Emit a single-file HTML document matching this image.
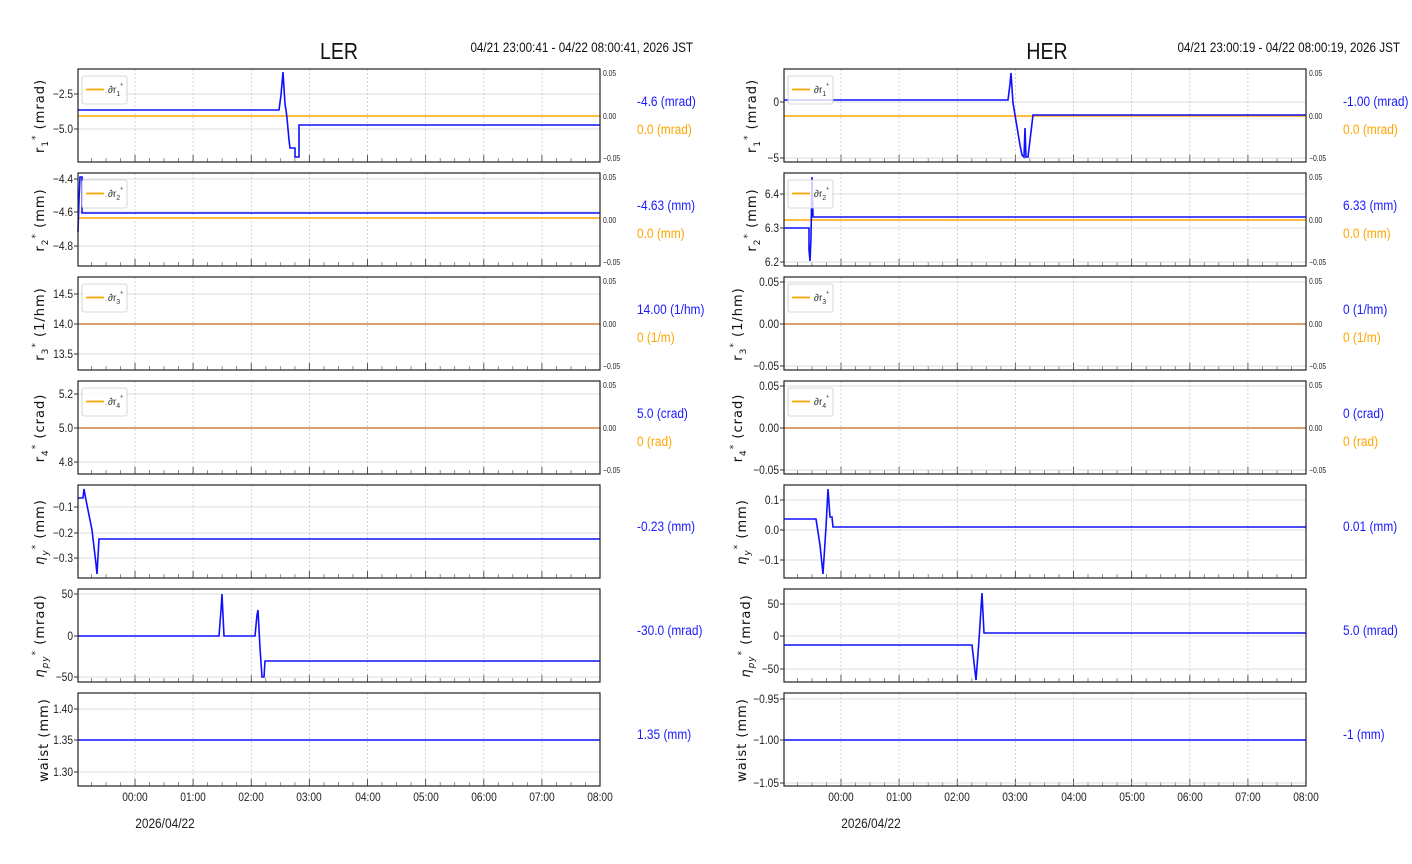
<!DOCTYPE html>
<html><head><meta charset="utf-8">
<style>
html,body{margin:0;padding:0;background:#fff;}
svg{display:block;}
.t{font-family:"Liberation Sans",sans-serif;font-size:12px;fill:#222;}
.s{font-family:"Liberation Sans",sans-serif;font-size:8px;fill:#222;}
.v{font-family:"Liberation Sans",sans-serif;font-size:14px;}
.yl{font-family:"DejaVu Sans",sans-serif;font-size:13px;fill:#111;letter-spacing:1px;}
.lg{font-family:"Liberation Sans",sans-serif;font-size:10px;fill:#333;}
.b{fill:none;stroke:#1010ff;stroke-width:1.6;}
.o{fill:none;stroke:#ffa500;stroke-width:1.6;}
.hg{stroke:#d0d0d0;stroke-width:0.8;}
</style></head><body>
<svg width="1412" height="864" viewBox="0 0 1412 864" xmlns="http://www.w3.org/2000/svg">
<defs>
<g id="fr">
  <g stroke="#c8c8c8" stroke-width="0.8" stroke-dasharray="2,2">
    <line x1="57" y1="0" x2="57" y2="93"/><line x1="115.1" y1="0" x2="115.1" y2="93"/>
    <line x1="173.3" y1="0" x2="173.3" y2="93"/><line x1="231.4" y1="0" x2="231.4" y2="93"/>
    <line x1="289.5" y1="0" x2="289.5" y2="93"/><line x1="347.6" y1="0" x2="347.6" y2="93"/>
    <line x1="405.8" y1="0" x2="405.8" y2="93"/><line x1="463.9" y1="0" x2="463.9" y2="93"/>
  </g>
  <g stroke="#555" stroke-width="1">
    <line x1="57" y1="93" x2="57" y2="86"/><line x1="115.1" y1="93" x2="115.1" y2="86"/>
    <line x1="173.3" y1="93" x2="173.3" y2="86"/><line x1="231.4" y1="93" x2="231.4" y2="86"/>
    <line x1="289.5" y1="93" x2="289.5" y2="86"/><line x1="347.6" y1="93" x2="347.6" y2="86"/>
    <line x1="405.8" y1="93" x2="405.8" y2="86"/><line x1="463.9" y1="93" x2="463.9" y2="86"/>
  </g>
  <g stroke="#777" stroke-width="0.8">
    <line x1="13.4" y1="93" x2="13.4" y2="89"/><line x1="28" y1="93" x2="28" y2="89"/><line x1="42.5" y1="93" x2="42.5" y2="89"/>
    <line x1="71.5" y1="93" x2="71.5" y2="89"/><line x1="86" y1="93" x2="86" y2="89"/><line x1="100.6" y1="93" x2="100.6" y2="89"/>
    <line x1="129.6" y1="93" x2="129.6" y2="89"/><line x1="144.2" y1="93" x2="144.2" y2="89"/><line x1="158.7" y1="93" x2="158.7" y2="89"/>
    <line x1="187.8" y1="93" x2="187.8" y2="89"/><line x1="202.3" y1="93" x2="202.3" y2="89"/><line x1="216.9" y1="93" x2="216.9" y2="89"/>
    <line x1="245.9" y1="93" x2="245.9" y2="89"/><line x1="260.5" y1="93" x2="260.5" y2="89"/><line x1="275" y1="93" x2="275" y2="89"/>
    <line x1="304" y1="93" x2="304" y2="89"/><line x1="318.6" y1="93" x2="318.6" y2="89"/><line x1="333.1" y1="93" x2="333.1" y2="89"/>
    <line x1="362.2" y1="93" x2="362.2" y2="89"/><line x1="376.7" y1="93" x2="376.7" y2="89"/><line x1="391.3" y1="93" x2="391.3" y2="89"/>
    <line x1="420.3" y1="93" x2="420.3" y2="89"/><line x1="434.8" y1="93" x2="434.8" y2="89"/><line x1="449.4" y1="93" x2="449.4" y2="89"/>
    <line x1="478.4" y1="93" x2="478.4" y2="89"/><line x1="493" y1="93" x2="493" y2="89"/><line x1="507.5" y1="93" x2="507.5" y2="89"/>
  </g>
</g>
<g id="bd"><rect x="0" y="0" width="522" height="93" fill="none" stroke="#222" stroke-width="1.2"/></g>
<g id="lgb"><rect x="0" y="0" width="45" height="28" rx="2" fill="#fff" fill-opacity="0.8" stroke="#ccc" stroke-width="0.8"/><line x1="4" y1="13.5" x2="22" y2="13.5" stroke="#ffa500" stroke-width="1.8"/></g>
</defs>

<!-- titles -->
<g transform="translate(339,0) scale(0.85,1)"><text x="0" y="59" text-anchor="middle" style="font-family:'Liberation Sans',sans-serif;font-size:23px;fill:#111">LER</text></g>
<g transform="translate(693,0) scale(0.835,1)"><text x="0" y="52" text-anchor="end" class="v" style="fill:#111">04/21 23:00:41 - 04/22 08:00:41, 2026 JST</text></g>
<g transform="translate(1047,0) scale(0.85,1)"><text x="0" y="59" text-anchor="middle" style="font-family:'Liberation Sans',sans-serif;font-size:23px;fill:#111">HER</text></g>
<g transform="translate(1400,0) scale(0.835,1)"><text x="0" y="52" text-anchor="end" class="v" style="fill:#111">04/21 23:00:19 - 04/22 08:00:19, 2026 JST</text></g>

<!-- frames -->
<g transform="translate(78,69)"><use href="#fr"/></g>
<g transform="translate(78,173)"><use href="#fr"/></g>
<g transform="translate(78,277)"><use href="#fr"/></g>
<g transform="translate(78,381)"><use href="#fr"/></g>
<g transform="translate(78,485)"><use href="#fr"/></g>
<g transform="translate(78,589)"><use href="#fr"/></g>
<g transform="translate(78,693)"><use href="#fr"/></g>
<g transform="translate(784,69)"><use href="#fr"/></g>
<g transform="translate(784,173)"><use href="#fr"/></g>
<g transform="translate(784,277)"><use href="#fr"/></g>
<g transform="translate(784,381)"><use href="#fr"/></g>
<g transform="translate(784,485)"><use href="#fr"/></g>
<g transform="translate(784,589)"><use href="#fr"/></g>
<g transform="translate(784,693)"><use href="#fr"/></g>

<g class="hg">
<line x1="78" x2="600" y1="94" y2="94"/><line x1="78" x2="600" y1="129" y2="129"/>
<line x1="78" x2="600" y1="179" y2="179"/><line x1="78" x2="600" y1="212" y2="212"/><line x1="78" x2="600" y1="246" y2="246"/>
<line x1="78" x2="600" y1="294" y2="294"/><line x1="78" x2="600" y1="354" y2="354"/>
<line x1="78" x2="600" y1="394" y2="394"/><line x1="78" x2="600" y1="462" y2="462"/>
<line x1="78" x2="600" y1="507" y2="507"/><line x1="78" x2="600" y1="533" y2="533"/><line x1="78" x2="600" y1="558" y2="558"/>
<line x1="78" x2="600" y1="594" y2="594"/><line x1="78" x2="600" y1="636" y2="636"/><line x1="78" x2="600" y1="677" y2="677"/>
<line x1="78" x2="600" y1="709" y2="709"/><line x1="78" x2="600" y1="772" y2="772"/>
<line x1="784" x2="1306" y1="102" y2="102"/><line x1="784" x2="1306" y1="158" y2="158"/>
<line x1="784" x2="1306" y1="194" y2="194"/><line x1="784" x2="1306" y1="228" y2="228"/><line x1="784" x2="1306" y1="262" y2="262"/>
<line x1="784" x2="1306" y1="282" y2="282"/><line x1="784" x2="1306" y1="366" y2="366"/>
<line x1="784" x2="1306" y1="386" y2="386"/><line x1="784" x2="1306" y1="470" y2="470"/>
<line x1="784" x2="1306" y1="500" y2="500"/><line x1="784" x2="1306" y1="530" y2="530"/><line x1="784" x2="1306" y1="560" y2="560"/>
<line x1="784" x2="1306" y1="604" y2="604"/><line x1="784" x2="1306" y1="636" y2="636"/><line x1="784" x2="1306" y1="669" y2="669"/>
<line x1="784" x2="1306" y1="699" y2="699"/><line x1="784" x2="1306" y1="783" y2="783"/>
</g>

<!-- data LEFT -->
<line x1="78" x2="600" y1="116" y2="116" class="o"/>
<polyline class="b" points="78,110 279,110 281,95 283,72 285,104 286,110 287,118 289,140 290,148 295,148 295,157 299,157 299,125 600,125"/>
<line x1="78" x2="600" y1="218" y2="218" class="o"/>
<polyline class="b" points="78,232 79,200 80,177 82,177 82,213 600,213"/>
<line x1="78" x2="600" y1="324" y2="324" class="o" style="stroke:#d08040"/>
<line x1="78" x2="600" y1="428" y2="428" class="o" style="stroke:#d08040"/>
<polyline class="b" points="78,498 83,498 84,489 86,500 92,530 96,564 97,574 99,539 600,539"/>
<polyline class="b" points="78,636 219,636 221,610 222,594 224,636 255,636 257,615 258,610 260,648 262,677 264,677 265,661 600,661"/>
<line x1="78" x2="600" y1="740" y2="740" class="b"/>

<!-- data RIGHT -->
<line x1="784" x2="1306" y1="116" y2="116" class="o"/>
<polyline class="b" points="784,100 1008,100 1010,84 1011,73 1013,103 1017,127 1020,145 1022,155 1024,157 1025,128 1026,157 1028,157 1033,115 1306,115"/>
<line x1="784" x2="1306" y1="220" y2="220" class="o"/>
<polyline class="b" points="784,228 809,228 809,250 810,261 811,238 812,177 813,217 1306,217"/>
<line x1="784" x2="1306" y1="324" y2="324" class="o" style="stroke:#d08040"/>
<line x1="784" x2="1306" y1="428" y2="428" class="o" style="stroke:#d08040"/>
<polyline class="b" points="784,519 816,519 820,545 823,574 826,527 828,489 830,517 832,517 833,527 1306,527"/>
<polyline class="b" points="784,645 972,645 976,680 979,640 982,593 984,633 1306,633"/>
<line x1="784" x2="1306" y1="740" y2="740" class="b"/>

<g transform="translate(78,69)"><use href="#bd"/></g>
<g transform="translate(78,173)"><use href="#bd"/></g>
<g transform="translate(78,277)"><use href="#bd"/></g>
<g transform="translate(78,381)"><use href="#bd"/></g>
<g transform="translate(78,485)"><use href="#bd"/></g>
<g transform="translate(78,589)"><use href="#bd"/></g>
<g transform="translate(78,693)"><use href="#bd"/></g>
<g transform="translate(784,69)"><use href="#bd"/></g>
<g transform="translate(784,173)"><use href="#bd"/></g>
<g transform="translate(784,277)"><use href="#bd"/></g>
<g transform="translate(784,381)"><use href="#bd"/></g>
<g transform="translate(784,485)"><use href="#bd"/></g>
<g transform="translate(784,589)"><use href="#bd"/></g>
<g transform="translate(784,693)"><use href="#bd"/></g>

<!-- legends -->
<g transform="translate(82,76)"><use href="#lgb"/></g>
<g transform="translate(82,180)"><use href="#lgb"/></g>
<g transform="translate(82,284)"><use href="#lgb"/></g>
<g transform="translate(82,388)"><use href="#lgb"/></g>
<g transform="translate(788,76)"><use href="#lgb"/></g>
<g transform="translate(788,180)"><use href="#lgb"/></g>
<g transform="translate(788,284)"><use href="#lgb"/></g>
<g transform="translate(788,388)"><use href="#lgb"/></g>
<text class="lg" x="108" y="93">∂r<tspan font-size="7" dy="3">1</tspan><tspan font-size="7" dy="-8">*</tspan></text>
<text class="lg" x="108" y="197">∂r<tspan font-size="7" dy="3">2</tspan><tspan font-size="7" dy="-8">*</tspan></text>
<text class="lg" x="108" y="301">∂r<tspan font-size="7" dy="3">3</tspan><tspan font-size="7" dy="-8">*</tspan></text>
<text class="lg" x="108" y="405">∂r<tspan font-size="7" dy="3">4</tspan><tspan font-size="7" dy="-8">*</tspan></text>
<text class="lg" x="814" y="93">∂r<tspan font-size="7" dy="3">1</tspan><tspan font-size="7" dy="-8">*</tspan></text>
<text class="lg" x="814" y="197">∂r<tspan font-size="7" dy="3">2</tspan><tspan font-size="7" dy="-8">*</tspan></text>
<text class="lg" x="814" y="301">∂r<tspan font-size="7" dy="3">3</tspan><tspan font-size="7" dy="-8">*</tspan></text>
<text class="lg" x="814" y="405">∂r<tspan font-size="7" dy="3">4</tspan><tspan font-size="7" dy="-8">*</tspan></text>

<!-- left axis tick marks -->
<g stroke="#333" stroke-width="1">
<line x1="74" x2="78" y1="94" y2="94"/><line x1="74" x2="78" y1="129" y2="129"/>
<line x1="74" x2="78" y1="179" y2="179"/><line x1="74" x2="78" y1="212" y2="212"/><line x1="74" x2="78" y1="246" y2="246"/>
<line x1="74" x2="78" y1="294" y2="294"/><line x1="74" x2="78" y1="324" y2="324"/><line x1="74" x2="78" y1="354" y2="354"/>
<line x1="74" x2="78" y1="394" y2="394"/><line x1="74" x2="78" y1="428" y2="428"/><line x1="74" x2="78" y1="462" y2="462"/>
<line x1="74" x2="78" y1="507" y2="507"/><line x1="74" x2="78" y1="533" y2="533"/><line x1="74" x2="78" y1="558" y2="558"/>
<line x1="74" x2="78" y1="594" y2="594"/><line x1="74" x2="78" y1="636" y2="636"/><line x1="74" x2="78" y1="677" y2="677"/>
<line x1="74" x2="78" y1="709" y2="709"/><line x1="74" x2="78" y1="740" y2="740"/><line x1="74" x2="78" y1="772" y2="772"/>
<line x1="780" x2="784" y1="102" y2="102"/><line x1="780" x2="784" y1="158" y2="158"/>
<line x1="780" x2="784" y1="194" y2="194"/><line x1="780" x2="784" y1="228" y2="228"/><line x1="780" x2="784" y1="262" y2="262"/>
<line x1="780" x2="784" y1="282" y2="282"/><line x1="780" x2="784" y1="324" y2="324"/><line x1="780" x2="784" y1="366" y2="366"/>
<line x1="780" x2="784" y1="386" y2="386"/><line x1="780" x2="784" y1="428" y2="428"/><line x1="780" x2="784" y1="470" y2="470"/>
<line x1="780" x2="784" y1="500" y2="500"/><line x1="780" x2="784" y1="530" y2="530"/><line x1="780" x2="784" y1="560" y2="560"/>
<line x1="780" x2="784" y1="604" y2="604"/><line x1="780" x2="784" y1="636" y2="636"/><line x1="780" x2="784" y1="669" y2="669"/>
<line x1="780" x2="784" y1="699" y2="699"/><line x1="780" x2="784" y1="740" y2="740"/><line x1="780" x2="784" y1="783" y2="783"/>
</g>

<g class="t" text-anchor="end" transform="translate(73,0) scale(0.85,1)">
<text x="0" y="98">−2.5</text><text x="0" y="133">−5.0</text>
<text x="0" y="183">−4.4</text><text x="0" y="216">−4.6</text><text x="0" y="250">−4.8</text>
<text x="0" y="298">14.5</text><text x="0" y="328">14.0</text><text x="0" y="358">13.5</text>
<text x="0" y="398">5.2</text><text x="0" y="432">5.0</text><text x="0" y="466">4.8</text>
<text x="0" y="511">−0.1</text><text x="0" y="537">−0.2</text><text x="0" y="562">−0.3</text>
<text x="0" y="598">50</text><text x="0" y="640">0</text><text x="0" y="681">−50</text>
<text x="0" y="713">1.40</text><text x="0" y="744">1.35</text><text x="0" y="776">1.30</text>
</g>
<g class="t" text-anchor="end" transform="translate(779,0) scale(0.85,1)">
<text x="0" y="106">0</text><text x="0" y="162">−5</text>
<text x="0" y="198">6.4</text><text x="0" y="232">6.3</text><text x="0" y="266">6.2</text>
<text x="0" y="286">0.05</text><text x="0" y="328">0.00</text><text x="0" y="370">−0.05</text>
<text x="0" y="390">0.05</text><text x="0" y="432">0.00</text><text x="0" y="474">−0.05</text>
<text x="0" y="504">0.1</text><text x="0" y="534">0.0</text><text x="0" y="564">−0.1</text>
<text x="0" y="608">50</text><text x="0" y="640">0</text><text x="0" y="673">−50</text>
<text x="0" y="703">−0.95</text><text x="0" y="744">−1.00</text><text x="0" y="787">−1.05</text>
</g>

<g class="s" transform="translate(603,0) scale(0.85,1)">
<text x="0" y="76">0.05</text><text x="0" y="119">0.00</text><text x="0" y="161">−0.05</text>
<text x="0" y="180">0.05</text><text x="0" y="223">0.00</text><text x="0" y="265">−0.05</text>
<text x="0" y="284">0.05</text><text x="0" y="327">0.00</text><text x="0" y="369">−0.05</text>
<text x="0" y="388">0.05</text><text x="0" y="431">0.00</text><text x="0" y="473">−0.05</text>
</g>
<g class="s" transform="translate(1309,0) scale(0.85,1)">
<text x="0" y="76">0.05</text><text x="0" y="119">0.00</text><text x="0" y="161">−0.05</text>
<text x="0" y="180">0.05</text><text x="0" y="223">0.00</text><text x="0" y="265">−0.05</text>
<text x="0" y="284">0.05</text><text x="0" y="327">0.00</text><text x="0" y="369">−0.05</text>
<text x="0" y="388">0.05</text><text x="0" y="431">0.00</text><text x="0" y="473">−0.05</text>
</g>

<g class="t" text-anchor="middle" transform="scale(0.85,1)">
<text x="158.8" y="801">00:00</text><text x="227.1" y="801">01:00</text><text x="295.3" y="801">02:00</text><text x="363.5" y="801">03:00</text>
<text x="432.9" y="801">04:00</text><text x="501.2" y="801">05:00</text><text x="569.4" y="801">06:00</text><text x="637.6" y="801">07:00</text><text x="705.9" y="801">08:00</text>
<text x="989.4" y="801">00:00</text><text x="1057.6" y="801">01:00</text><text x="1125.9" y="801">02:00</text><text x="1194.1" y="801">03:00</text>
<text x="1263.5" y="801">04:00</text><text x="1331.8" y="801">05:00</text><text x="1400" y="801">06:00</text><text x="1468.2" y="801">07:00</text><text x="1536.5" y="801">08:00</text>
<text x="194.1" y="828" font-size="14">2026/04/22</text><text x="1024.7" y="828" font-size="14">2026/04/22</text>
</g>

<g class="v" transform="translate(637,0) scale(0.85,1)">
<text x="0" y="106" fill="#1a1aff">-4.6 (mrad)</text><text x="0" y="134" fill="#ffa500">0.0 (mrad)</text>
<text x="0" y="210" fill="#1a1aff">-4.63 (mm)</text><text x="0" y="238" fill="#ffa500">0.0 (mm)</text>
<text x="0" y="314" fill="#1a1aff">14.00 (1/hm)</text><text x="0" y="342" fill="#ffa500">0 (1/m)</text>
<text x="0" y="418" fill="#1a1aff">5.0 (crad)</text><text x="0" y="446" fill="#ffa500">0 (rad)</text>
<text x="0" y="531" fill="#1a1aff">-0.23 (mm)</text>
<text x="0" y="635" fill="#1a1aff">-30.0 (mrad)</text>
<text x="0" y="739" fill="#1a1aff">1.35 (mm)</text>
</g>
<g class="v" transform="translate(1343,0) scale(0.85,1)">
<text x="0" y="106" fill="#1a1aff">-1.00 (mrad)</text><text x="0" y="134" fill="#ffa500">0.0 (mrad)</text>
<text x="0" y="210" fill="#1a1aff">6.33 (mm)</text><text x="0" y="238" fill="#ffa500">0.0 (mm)</text>
<text x="0" y="314" fill="#1a1aff">0 (1/hm)</text><text x="0" y="342" fill="#ffa500">0 (1/m)</text>
<text x="0" y="418" fill="#1a1aff">0 (crad)</text><text x="0" y="446" fill="#ffa500">0 (rad)</text>
<text x="0" y="531" fill="#1a1aff">0.01 (mm)</text>
<text x="0" y="635" fill="#1a1aff">5.0 (mrad)</text>
<text x="0" y="739" fill="#1a1aff">-1 (mm)</text>
</g>

<g class="yl" text-anchor="middle">
<text transform="translate(44,116) rotate(-90)">r<tspan font-size="9" dy="4">1</tspan><tspan font-size="9" dy="-10">*</tspan><tspan dy="6"> (mrad)</tspan></text>
<text transform="translate(44,220) rotate(-90)">r<tspan font-size="9" dy="4">2</tspan><tspan font-size="9" dy="-10">*</tspan><tspan dy="6"> (mm)</tspan></text>
<text transform="translate(44,324) rotate(-90)">r<tspan font-size="9" dy="4">3</tspan><tspan font-size="9" dy="-10">*</tspan><tspan dy="6"> (1/hm)</tspan></text>
<text transform="translate(44,428) rotate(-90)">r<tspan font-size="9" dy="4">4</tspan><tspan font-size="9" dy="-10">*</tspan><tspan dy="6"> (crad)</tspan></text>
<text transform="translate(44,532) rotate(-90)"><tspan font-style="italic">η</tspan><tspan font-size="9" dy="4" font-style="italic">y</tspan><tspan font-size="9" dy="-10">*</tspan><tspan dy="6"> (mm)</tspan></text>
<text transform="translate(44,636) rotate(-90)"><tspan font-style="italic">η</tspan><tspan font-size="9" dy="4" font-style="italic">py</tspan><tspan font-size="9" dy="-10">*</tspan><tspan dy="6"> (mrad)</tspan></text>
<text transform="translate(48,740) rotate(-90)">waist (mm)</text>
<text transform="translate(756,116) rotate(-90)">r<tspan font-size="9" dy="4">1</tspan><tspan font-size="9" dy="-10">*</tspan><tspan dy="6"> (mrad)</tspan></text>
<text transform="translate(756,220) rotate(-90)">r<tspan font-size="9" dy="4">2</tspan><tspan font-size="9" dy="-10">*</tspan><tspan dy="6"> (mm)</tspan></text>
<text transform="translate(742,324) rotate(-90)">r<tspan font-size="9" dy="4">3</tspan><tspan font-size="9" dy="-10">*</tspan><tspan dy="6"> (1/hm)</tspan></text>
<text transform="translate(742,428) rotate(-90)">r<tspan font-size="9" dy="4">4</tspan><tspan font-size="9" dy="-10">*</tspan><tspan dy="6"> (crad)</tspan></text>
<text transform="translate(746,532) rotate(-90)"><tspan font-style="italic">η</tspan><tspan font-size="9" dy="4" font-style="italic">y</tspan><tspan font-size="9" dy="-10">*</tspan><tspan dy="6"> (mm)</tspan></text>
<text transform="translate(750,636) rotate(-90)"><tspan font-style="italic">η</tspan><tspan font-size="9" dy="4" font-style="italic">py</tspan><tspan font-size="9" dy="-10">*</tspan><tspan dy="6"> (mrad)</tspan></text>
<text transform="translate(746,740) rotate(-90)">waist (mm)</text>
</g>
</svg>
</body></html>
